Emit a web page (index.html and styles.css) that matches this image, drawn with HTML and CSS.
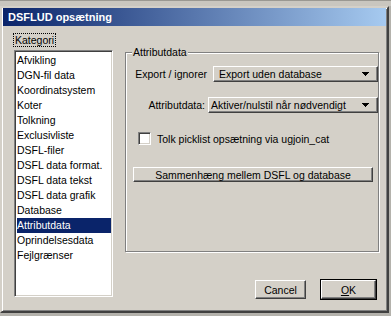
FILE: index.html
```html
<!DOCTYPE html>
<html>
<head>
<meta charset="utf-8">
<link rel="stylesheet" href="styles.css">
</head>
<body>
<div class="screen">
  <div class="topstrip"></div>
  <div class="dialog">
    <div class="titlebar">DSFLUD opsætning</div>
    <div class="client">
      <div class="leftcol">
        <span class="catlabel">Kategori</span>
        <ul class="listbox">
          <li>Afvikling</li>
          <li>DGN-fil data</li>
          <li>Koordinatsystem</li>
          <li>Koter</li>
          <li>Tolkning</li>
          <li>Exclusivliste</li>
          <li>DSFL-filer</li>
          <li>DSFL data format.</li>
          <li>DSFL data tekst</li>
          <li>DSFL data grafik</li>
          <li>Database</li>
          <li class="selected">Attributdata</li>
          <li>Oprindelsesdata</li>
          <li>Fejlgrænser</li>
        </ul>
      </div>
      <div class="rightcol">
        <div class="group">
          <span class="group-title">Attributdata</span>
          <div class="row row1">
            <span class="lbl">Export / ignorer</span>
            <div class="combo combo1"><span class="combo-text">Export uden database</span>
              <svg class="arrow" width="7" height="4" viewBox="0 0 7 4"><rect x="0" y="0" width="7" height="1"/><rect x="1" y="1" width="5" height="1"/><rect x="2" y="2" width="3" height="1"/><rect x="3" y="3" width="1" height="1"/></svg>
            </div>
          </div>
          <div class="row row2">
            <span class="lbl">Attributdata:</span>
            <div class="combo combo2"><span class="combo-text">Aktiver/nulstil når nødvendigt</span>
              <svg class="arrow" width="7" height="4" viewBox="0 0 7 4"><rect x="0" y="0" width="7" height="1"/><rect x="1" y="1" width="5" height="1"/><rect x="2" y="2" width="3" height="1"/><rect x="3" y="3" width="1" height="1"/></svg>
            </div>
          </div>
          <div class="checkrow">
            <span class="checkbox"></span>
            <span class="lbl">Tolk picklist opsætning via ugjoin_cat</span>
          </div>
          <div class="btn wide">Sammenhæng mellem DSFL og database</div>
        </div>
        <div class="buttons">
          <div class="btn cancel">Cancel</div>
          <div class="defbtn"><div class="btn ok"><u>O</u>K</div></div>
        </div>
      </div>
    </div>
  </div>
</div>
</body>
</html>
```

FILE: styles.css
```css
* { box-sizing: border-box; }
html, body { margin: 0; padding: 0; }
body {
  font-family: "Liberation Sans", Arial, sans-serif;
  font-size: 10.5px;
  color: #000;
}
.screen {
  width: 391px;
  height: 316px;
  background: #b4b2ac;
  overflow: hidden;
}
.topstrip {
  height: 6px;
  background: #c9c6bf;
  border-top: 1px solid #9a9892;
}
.dialog {
  width: 389px;
  height: 307px;
  background: #d4d0c8;
  border: 2px solid;
  border-color: #d4d0c8 #404040 #404040 #d4d0c8;
  box-shadow: inset 1px 1px 0 #fff, inset -1px -1px 0 #808080;
  padding: 0 1px 1px 1px;
  display: flex;
  flex-direction: column;
}
.titlebar {
  height: 18px;
  line-height: 18px;
  padding-left: 5px;
  font-size: 11px;
  font-weight: bold;
  color: #fff;
  background: linear-gradient(to right, #0a246a, #a6caf0);
  white-space: nowrap;
}
.client {
  flex: 1;
  display: flex;
  padding: 7px 0 10px 11px;
}
.leftcol {
  width: 99px;
  display: flex;
  flex-direction: column;
}
.catlabel {
  align-self: flex-start;
  margin-left: -1px;
  height: 14px;
  line-height: 12px;
  padding: 0 1px;
  border: 1px dotted #000;
}
.listbox {
  list-style: none;
  margin: 3px 0 0 0;
  padding: 2px 0 0 0;
  height: 247px;
  background: #fff;
  border: 1px solid;
  border-color: #808080 #fff #fff #808080;
  box-shadow: inset 1px 1px 0 #404040, inset -1px -1px 0 #d4d0c8;
}
.listbox li {
  height: 15px;
  line-height: 15px;
  margin: 0 1px 0 2px;
  white-space: nowrap;
}
.listbox li.selected {
  background: #0a246a;
  color: #fff;
}
.rightcol {
  width: 254px;
  margin-left: 12px;
  display: flex;
  flex-direction: column;
}
.group {
  position: relative;
  margin-top: 19px;
  height: 200px;
  border: 1px solid #808080;
  box-shadow: inset 1px 1px 0 #fff, 1px 1px 0 #fff;
  padding-top: 13px;
  display: flex;
  flex-direction: column;
}
.group-title {
  position: absolute;
  top: -7px;
  left: 6px;
  padding: 0 1px;
  line-height: 13px;
  background: #d4d0c8;
}
.row {
  display: flex;
  justify-content: flex-end;
  align-items: center;
  height: 16px;
}
.row1 { gap: 6px; }
.row2 { gap: 3px; margin-top: 15px; }
.lbl { white-space: nowrap; }
.combo {
  height: 16px;
  display: flex;
  align-items: center;
  justify-content: space-between;
  padding: 0 8px 0 5px;
  border: 1px solid;
  border-color: #fff #404040 #404040 #fff;
  box-shadow: inset -1px -1px 0 #808080;
  white-space: nowrap;
}
.combo1 { width: 165px; }
.combo2 { width: 170px; padding-left: 2px; }
.arrow { fill: #000; flex: none; }
.checkrow {
  display: flex;
  align-items: center;
  gap: 6px;
  margin: 19px 0 0 12px;
  height: 13px;
}
.checkbox {
  width: 13px;
  height: 13px;
  background: #fff;
  border: 1px solid;
  border-color: #808080 #fff #fff #808080;
  box-shadow: inset 1px 1px 0 #404040, inset -1px -1px 0 #d4d0c8;
}
.btn {
  display: flex;
  align-items: center;
  justify-content: center;
  border: 1px solid;
  border-color: #fff #404040 #404040 #fff;
  box-shadow: inset -1px -1px 0 #808080;
  background: #d4d0c8;
  white-space: nowrap;
}
.wide {
  margin: 22px 0 0 7px;
  width: 240px;
  height: 15px;
}
.buttons {
  margin-top: auto;
  display: flex;
  justify-content: flex-end;
  align-items: center;
  gap: 14px;
  padding-right: 2px;
}
.cancel { width: 51px; height: 19px; }
.defbtn { border: 1px solid #000; }
.ok { width: 55px; height: 19px; }
```
